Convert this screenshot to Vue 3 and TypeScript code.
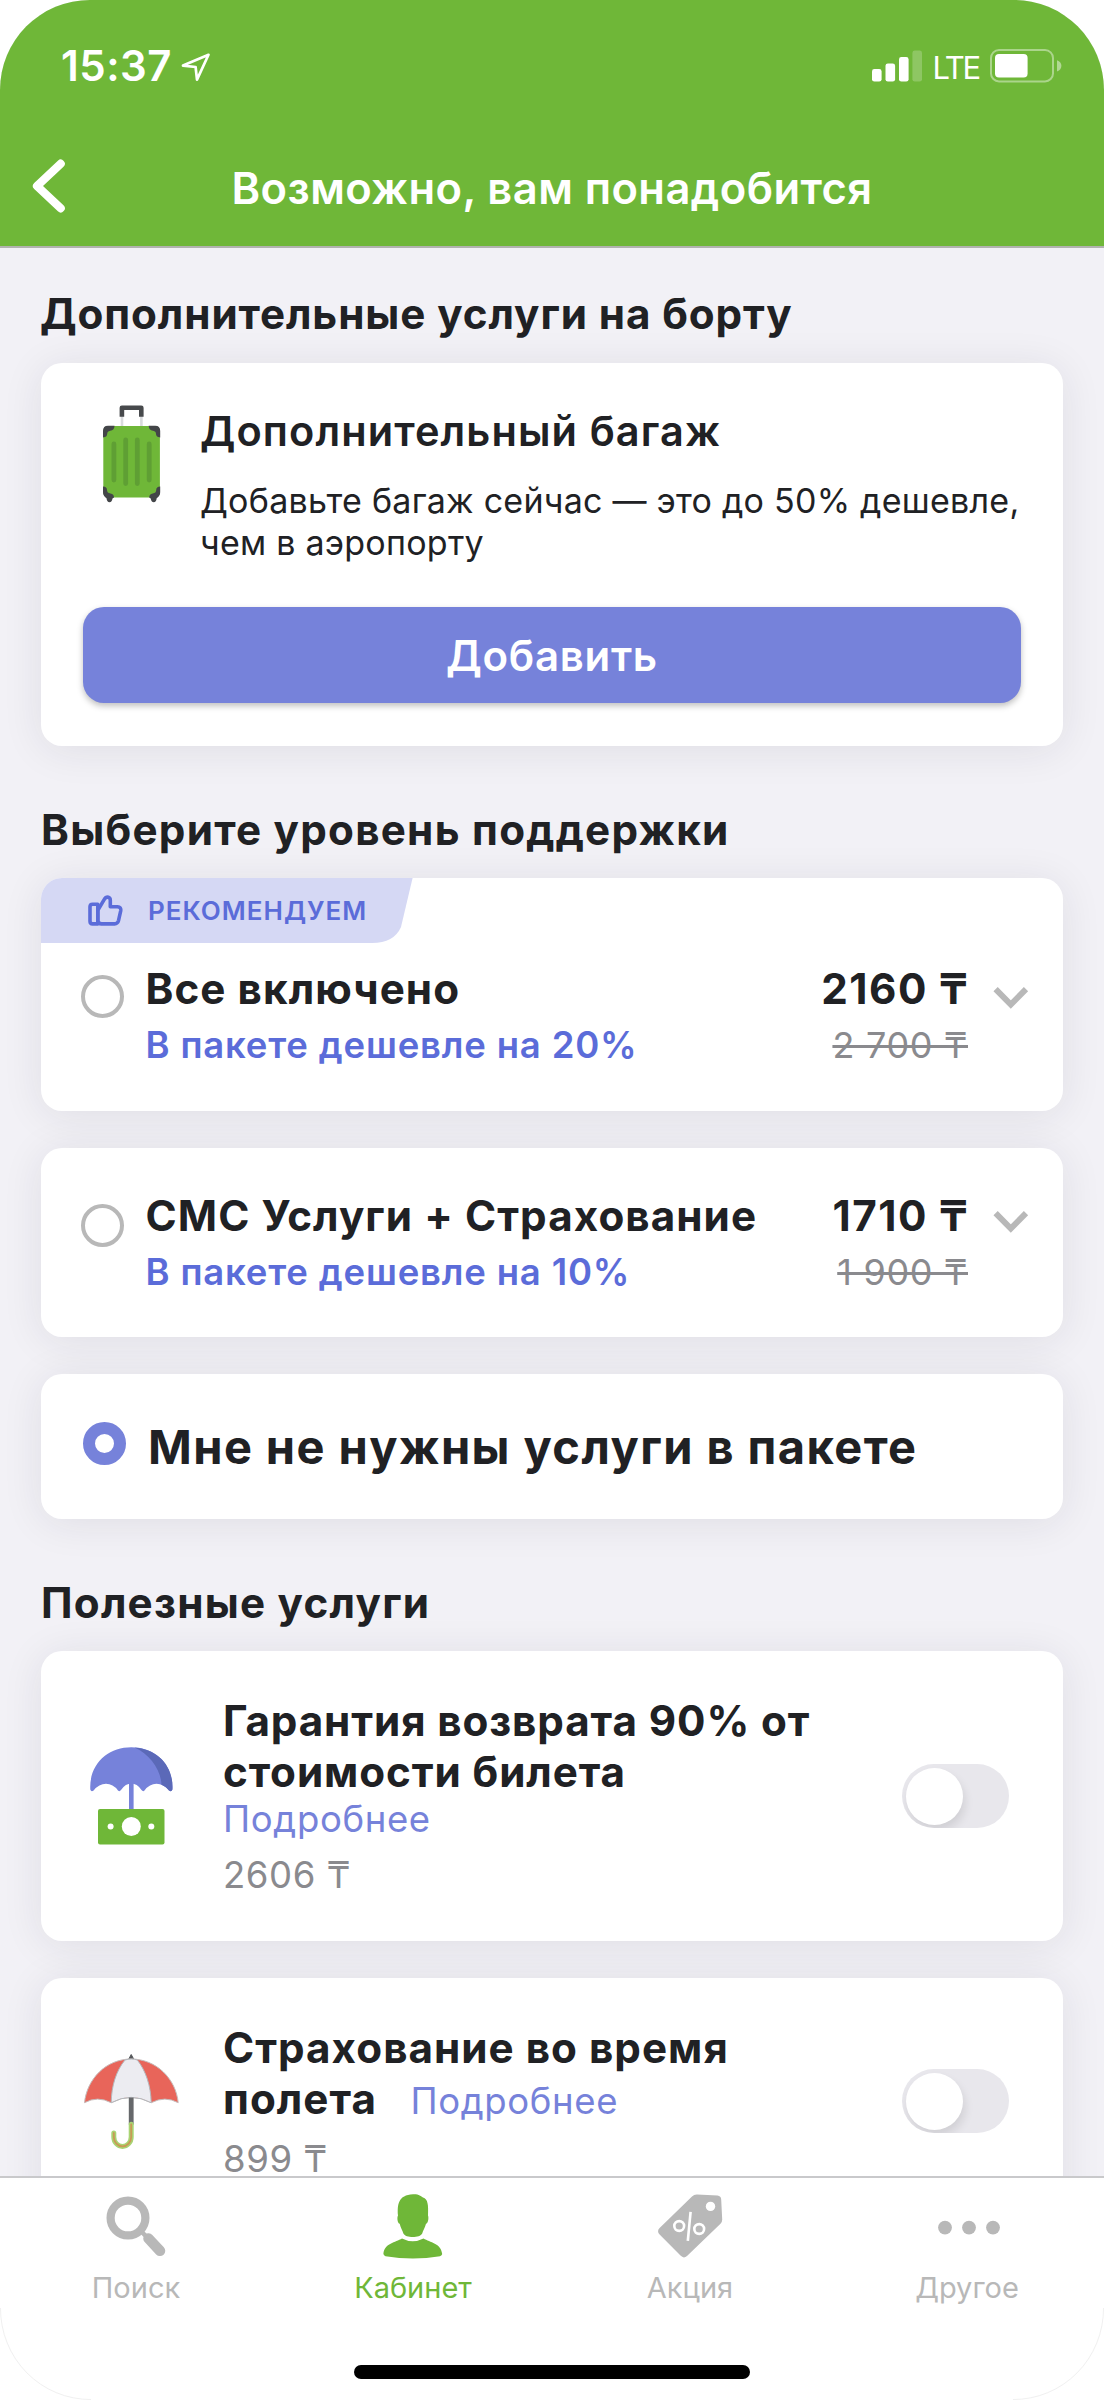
<script setup lang="ts">
interface SupportPlan {
  title: string
  note: string
  price: string
  oldPrice: string
  recommended: boolean
}

interface Tab {
  id: string
  label: string
  active: boolean
}

const plans: SupportPlan[] = [
  { title: 'Все включено', note: 'В пакете дешевле на 20%', price: '2160 ₸', oldPrice: '2 700 ₸', recommended: true },
  { title: 'СМС Услуги + Страхование', note: 'В пакете дешевле на 10%', price: '1710 ₸', oldPrice: '1 900 ₸', recommended: false },
]

const tabs: Tab[] = [
  { id: 'search', label: 'Поиск', active: false },
  { id: 'account', label: 'Кабинет', active: true },
  { id: 'promo', label: 'Акция', active: false },
  { id: 'more', label: 'Другое', active: false },
]
</script>

<template>
  <div class="screen">
    <header class="header">
      <div class="status">
        <div class="clock">
          <span class="time">15:37</span>
          <svg class="location" width="30" height="29" viewBox="0 0 30 29">
            <path d="M27.5 1.8 2 12.6 14.6 14 16 26.6Z" fill="none" stroke="#fff" stroke-width="2.7" stroke-linejoin="round" />
          </svg>
        </div>
        <div class="indicators">
          <svg width="51" height="32" viewBox="0 0 51 32" fill="#fff">
            <rect x="0" y="19" width="9.6" height="12.6" rx="2.4" />
            <rect x="13.5" y="13.4" width="9.6" height="18.2" rx="2.4" />
            <rect x="27" y="7" width="9.6" height="24.6" rx="2.4" />
            <rect x="40.4" y="0.6" width="9.6" height="31" rx="2.4" opacity="0.22" />
          </svg>
          <span class="network">LTE</span>
          <svg width="72" height="34" viewBox="0 0 72 34">
            <rect x="1" y="1" width="62" height="31.4" rx="8" fill="none" stroke="#fff" stroke-opacity="0.42" stroke-width="2" />
            <rect x="5" y="5" width="32.6" height="23.4" rx="4" fill="#fff" />
            <path d="M67 11.2q4.4 1.6 4.4 5.6t-4.4 5.6z" fill="#fff" fill-opacity="0.46" />
          </svg>
        </div>
      </div>
      <div class="navbar">
        <svg class="back" width="34" height="54" viewBox="0 0 34 54">
          <path d="M28.7 4.7 5 27 28.7 49.3" fill="none" stroke="#fff" stroke-width="8.2" stroke-linecap="round" stroke-linejoin="round" />
        </svg>
        <h1 class="page-title">Возможно, вам понадобится</h1>
      </div>
    </header>

    <main class="content">
      <h2 class="section first">Дополнительные услуги на борту</h2>
      <section class="card baggage">
        <div class="baggage-info">
          <svg class="suitcase" width="58" height="98" viewBox="0 0 58 98">
            <path d="M19 10v12M38.4 10v12" stroke="#d9dbdd" stroke-width="2.6" />
            <path d="M18.9 11.8V2.7h19.4v9.1" fill="none" stroke="#47494c" stroke-width="4.6" stroke-linejoin="round" />
            <rect x="0.3" y="21" width="56.6" height="71.4" rx="5" fill="#6fb738" />
            <path d="M10.9 39v36M22.7 35v43.5M34.3 35v43.5M46.2 39v36" stroke="#5f9f34" stroke-width="4.8" stroke-linecap="round" />
            <path d="M0 32.5V26q0-5.3 5-5.3h6.5q0 4.3-4.3 5-3 .6-3 3.3 0 3-4.2 3.5zM57.2 32.5V26q0-5.3-5-5.3h-6.5q0 4.3 4.3 5 3 .6 3 3.3 0 3 4.2 3.5zM0 81.5q4 0 4 3.5 0 3 3.5 3.5 3.5.6 3.5 4l-1.5 1q-.5 3.7-3 3.7t-3-4Q0 91 0 87zM57.2 81.5q-4 0-4 3.5 0 3-3.5 3.5-3.5.6-3.5 4l1.5 1q.5 3.7 3 3.7t3-4q3.5-2.2 3.5-6.2z" fill="#434548" />
          </svg>
          <div class="baggage-text">
            <h3 class="baggage-title">Дополнительный багаж</h3>
            <p class="baggage-note">Добавьте багаж сейчас — это до 50% дешевле,<br />чем в аэропорту</p>
          </div>
        </div>
        <button class="add" type="button">Добавить</button>
      </section>

      <h2 class="section">Выберите уровень поддержки</h2>
      <section v-for="plan in plans" :key="plan.title" class="card plan" :class="{ recommended: plan.recommended }">
        <div v-if="plan.recommended" class="badge">
          <svg class="badge-shape" width="373" height="65" viewBox="0 0 373 65">
            <path d="M0 0H371.6L360 49Q353 65 331 65H0Z" fill="#d5d8f4" />
          </svg>
          <svg class="thumb" width="35" height="31" viewBox="0 0 35 31" fill="none" stroke="#5b6cd9" stroke-width="3.6" stroke-linejoin="round">
            <path d="M9.8 9.2H4.6Q2 9.2 2 11.8V26.3Q2 28.9 4.6 28.9H9.8Z" />
            <path d="M9.8 15.2 16.3 4.4Q17.8 1.8 20.4 2.2 22.4 2.8 22.3 5.5V11.7H29.5Q33.3 12 32.7 15.8L30.5 25.6Q29.7 28.7 26.5 28.9H13.5Q10.4 28.7 9.8 26Z" />
          </svg>
          <span class="badge-label">РЕКОМЕНДУЕМ</span>
        </div>
        <div class="plan-body">
          <span class="radio"></span>
          <div class="plan-text">
            <div class="plan-title">{{ plan.title }}</div>
            <div class="plan-note">{{ plan.note }}</div>
          </div>
          <div class="plan-prices">
            <div class="price">{{ plan.price }}</div>
            <div class="old-price">{{ plan.oldPrice }}</div>
          </div>
          <svg class="chevron" width="36" height="24" viewBox="0 0 36 24">
            <path d="M2.6 3.2 17.8 18.6 33 3.2" fill="none" stroke="#b8b8b8" stroke-width="6" />
          </svg>
        </div>
      </section>
      <section class="card none">
        <span class="radio checked"></span>
        <div class="none-title">Мне не нужны услуги в пакете</div>
      </section>

      <h2 class="section">Полезные услуги</h2>
      <section class="card service refund">
        <svg class="service-icon" width="84" height="99" viewBox="0 0 84 99">
          <path d="M0.3 42.5C-1 17 18 .3 41.3.3S83.6 17 82.4 42.5Q81.5 45.3 79 43.5 73.5 36.8 66.5 36.8T54.5 43.5Q53 45 51.5 43 47 36.6 41.3 36.6T31 43Q29.5 45 28 43.5 23 36.8 16 36.8T3.6 43.5Q1.2 45.3.3 42.5Z" fill="#7682da" />
          <path d="M44.5.4C67 2 83.8 18 82.4 42.5Q81.5 45.3 79 43.5 75.5 39.3 71.5 37.8C71 23 60 7 44.5.4Z" fill="#5b69b8" />
          <rect x="39" y="36" width="4.6" height="27" fill="#7682da" />
          <rect x="8" y="62" width="66.5" height="35.4" rx="2" fill="#6fb738" />
          <circle cx="41.3" cy="79.5" r="9.5" fill="#fff" />
          <circle cx="20.6" cy="79.5" r="3" fill="#fff" />
          <circle cx="61.3" cy="79.5" r="3" fill="#fff" />
        </svg>
        <div class="service-text">
          <div class="service-title">Гарантия возврата 90% от<br />стоимости билета</div>
          <a class="more block">Подробнее</a>
          <div class="service-price">2606 ₸</div>
        </div>
        <span class="toggle"></span>
      </section>
      <section class="card service flight">
        <svg class="service-icon" width="95" height="97" viewBox="0 0 95 97">
          <path d="M44 6.5 47.2.5 50.5 6.5Z" fill="#55575a" stroke="#55575a" />
          <path d="M.5 48.7C3 25 22 5 47.2 5S92 25 94.2 48.7Q81 41.5 67.2 48.7 47 38 27.2 48.7 13.5 41.5.5 48.7Z" fill="#e8655a" stroke="#c6bcbb" stroke-width="1" />
          <path d="M47.2 5Q44 5 41 6C32 17 27.5 32 27.2 48.7Q47 38 67.2 48.7C66.8 32 62 17 53.3 6Q50.5 5 47.2 5Z" fill="#ececf1" stroke="#b4b8bc" stroke-width="1" />
          <rect x="44.8" y="43.6" width="4.8" height="27" fill="#66686b" />
          <path d="M47.2 70.3V83A8.7 9.4 0 0 1 29.8 83V79" fill="none" stroke="#a8d472" stroke-width="5" stroke-linecap="round" />
          <path d="M47.2 70.3V83A8.7 9.4 0 0 1 29.8 83V79" fill="none" stroke="#c99a55" stroke-width="1.8" stroke-linecap="round" />
        </svg>
        <div class="service-text">
          <div class="service-title">Страхование во время<br />полета<a class="more inline">Подробнее</a></div>
          <div class="service-price">899 ₸</div>
        </div>
        <span class="toggle"></span>
      </section>
    </main>

    <nav class="tabbar">
      <div v-for="tab in tabs" :key="tab.id" class="tab" :class="{ active: tab.active }">
        <svg v-if="tab.id === 'search'" class="tab-icon" width="60" height="66" viewBox="0 0 60 66">
          <circle cx="22" cy="24" r="17.4" fill="none" stroke="currentColor" stroke-width="8.2" />
          <path d="M35 37 43 45.5" stroke="currentColor" stroke-width="4.5" />
          <path d="M42.5 44.5 54 56.8" stroke="currentColor" stroke-width="10.5" stroke-linecap="round" />
        </svg>
        <svg v-else-if="tab.id === 'account'" class="tab-icon" width="60" height="66" viewBox="0 0 60 66" fill="currentColor">
          <path d="M30 .3C36 0 38 2.5 40 3.5 45 5 45.5 11 45 21.5 46 24 45 29.5 43 29.7 42 34 40 36 39.2 39.5 37 44.3 22.5 44.3 20.4 39.5 19.6 36 17.5 34 16.7 29.7 14.7 29.5 13.7 24 15 21.5 14.3 11 15 1 30 .3Z" />
          <path d="M19 44.5Q29.7 50 40.5 44.5C47 48.5 58 49 59.2 60Q59 61.5 57 62.2 30 67 2.5 62.2.8 61.5.4 60C1.5 49 12.5 48.5 19 44.5Z" />
        </svg>
        <svg v-else-if="tab.id === 'promo'" class="tab-icon" width="65" height="66" viewBox="0 0 65 66">
          <path d="M39 .6 59.5 1.6Q63 2 63.2 5.5L64.2 25.5Q64.3 28 62.5 29.8L29 62Q25.7 65 22.5 61.6L1.6 40.5Q-1.5 37.2 1.6 34L34 2.5Q36 .5 39 .6Z" fill="currentColor" />
          <circle cx="52.5" cy="12.4" r="4.7" fill="#fff" />
          <g fill="none" stroke="#fff" stroke-width="2.6">
            <circle cx="21.2" cy="32" r="4.9" />
            <circle cx="41.2" cy="35" r="4.9" />
            <path d="M32.6 17.8 29.8 46.8" />
          </g>
        </svg>
        <svg v-else class="tab-icon dots" width="64" height="66" viewBox="0 0 64 66" fill="currentColor">
          <circle cx="8" cy="33.6" r="6.9" />
          <circle cx="32" cy="33.6" r="6.9" />
          <circle cx="56" cy="33.6" r="6.9" />
        </svg>
        <span class="tab-label">{{ tab.label }}</span>
      </div>
      <span class="home-bar"></span>
    </nav>
    <svg class="corners" width="1104" height="92" viewBox="0 0 1104 92" fill="none" stroke="#f0f0f0" stroke-width="1">
      <path d="M.5 0A90 91 0 0 0 91 91.5M1103.5 0A90 91 0 0 1 1013 91.5" />
    </svg>
  </div>
</template>

<style>
body {
  margin: 0;
  background: #fff;
}
</style>

<style scoped>
* {
  box-sizing: border-box;
}
h1,
h2,
h3,
p {
  margin: 0;
}
svg {
  display: block;
  flex: none;
}
.screen {
  position: relative;
  width: 1104px;
  height: 2400px;
  display: flex;
  flex-direction: column;
  overflow: hidden;
  border-radius: 90px 90px 0 0;
  background: #f2f1f6;
  color: #202124;
  font-family: Inter, 'Noto Sans', sans-serif;
}
.header {
  flex: none;
  height: 248px;
  background: #6fb738;
  border-bottom: 2px solid #b1b3ae;
  color: #fff;
}
.status {
  height: 134px;
  padding: 41px 42px 0 61px;
  display: flex;
  justify-content: space-between;
  align-items: flex-start;
}
.clock {
  display: flex;
}
.time {
  width: 120px;
  font-size: 42px;
  line-height: 50px;
  font-weight: 600;
  letter-spacing: 0.5px;
}
.location {
  margin-top: 12px;
}
.indicators {
  display: flex;
  height: 50px;
  align-items: center;
}
.indicators svg:first-child {
  margin-right: 9.5px;
}
.network {
  width: 57.5px;
  font-size: 31px;
  line-height: 40px;
  padding-top: 3px;
  letter-spacing: -2.3px;
}
.navbar {
  height: 112px;
  display: flex;
  align-items: flex-start;
  padding: 25px 32px 0;
}
.page-title {
  flex: 1;
  margin: 3.5px 34px 0 0;
  text-align: center;
  font-size: 43.5px;
  line-height: 50px;
  font-weight: 600;
  letter-spacing: 0.44px;
  white-space: nowrap;
}
.content {
  flex: 1;
  min-height: 0;
  overflow: hidden;
  padding: 0 41px;
}
.section {
  margin: 59px 0 23px;
  height: 50px;
  font-size: 42.2px;
  line-height: 50px;
  font-weight: 700;
  letter-spacing: 1.25px;
  white-space: nowrap;
}
.section.first {
  margin: 41px 0 24px -1px;
  letter-spacing: 0.9px;
}
.card {
  position: relative;
  width: 1022px;
  background: #fff;
  border-radius: 21px;
  box-shadow: 0 4px 42px rgba(30, 30, 50, 0.09);
}
.card + .card {
  margin-top: 37px;
}
.baggage {
  height: 383px;
  padding: 42px 42px 0;
}
.baggage-info {
  display: flex;
  height: 202px;
  padding-left: 20px;
}
.baggage-text {
  margin-left: 39px;
  white-space: nowrap;
}
.baggage-title {
  font-size: 41.5px;
  line-height: 50px;
  font-weight: 600;
  letter-spacing: 1.1px;
  margin-top: 1px;
}
.baggage-note {
  margin-top: 24px;
  font-size: 34px;
  line-height: 41.5px;
  letter-spacing: 0.25px;
}
.add {
  display: block;
  width: 938px;
  height: 96px;
  padding: 0;
  border: 0;
  border-radius: 21px;
  background: #7682da;
  box-shadow: 0 3px 6px rgba(0, 0, 0, 0.25);
  color: #fff;
  font: 600 42px/95px Inter, sans-serif;
  letter-spacing: 0.7px;
}
.plan {
  height: 189px;
}
.plan.recommended {
  height: 233px;
}
.badge {
  position: relative;
  height: 65px;
  display: flex;
  align-items: center;
  padding-left: 47px;
  border-top-left-radius: 21px;
  overflow: hidden;
}
.badge-shape {
  position: absolute;
  left: 0;
  top: 0;
}
.thumb {
  position: relative;
}
.badge-label {
  position: relative;
  margin-left: 25px;
  font-size: 26px;
  line-height: 32px;
  font-weight: 600;
  letter-spacing: 1px;
  color: #5b6cd9;
}
.plan-body {
  display: flex;
  padding: 43px 34px 0 40px;
}
.recommended .plan-body {
  padding-top: 21px;
}
.radio {
  flex: none;
  width: 43px;
  height: 43px;
  margin-top: 13px;
  border: 4px solid #b8b8b8;
  border-radius: 50%;
}
.recommended .radio {
  margin-top: 11px;
}
.plan-text {
  flex: 1;
  margin-left: 21.5px;
}
.plan-title,
.price {
  font-size: 42.2px;
  line-height: 50px;
  font-weight: 700;
  letter-spacing: 1.06px;
  white-space: nowrap;
}
.price {
  letter-spacing: 1.5px;
}
.plan-note,
.old-price {
  margin-top: 8.5px;
  font-size: 36.5px;
  line-height: 44px;
  font-weight: 600;
  letter-spacing: 0.82px;
  color: #5b6cd9;
}
.plan-prices {
  text-align: right;
}
.old-price {
  margin-right: 1px;
  font-size: 36px;
  font-weight: 400;
  letter-spacing: 0.7px;
  color: #8a8a8e;
  text-decoration: line-through;
}
.chevron {
  margin: 19px 0 0 24px;
}
.recommended .chevron {
  margin-top: 22px;
}
.none {
  height: 145px;
  display: flex;
  align-items: flex-start;
  padding: 44.5px 42px 0;
}
.radio.checked {
  margin-top: 3.5px;
  border: 12.5px solid #7682da;
}
.none-title {
  margin-left: 22px;
  font-size: 47px;
  line-height: 56px;
  font-weight: 700;
  letter-spacing: 1.42px;
  white-space: nowrap;
}
.service {
  height: 290px;
  display: flex;
  align-items: flex-start;
  padding-right: 54px;
}
.service-text {
  flex: 1;
  margin-top: 44px;
  white-space: nowrap;
}
.service-title {
  font-size: 42.2px;
  line-height: 51px;
  font-weight: 700;
  letter-spacing: 1.02px;
}
.refund .service-title {
  letter-spacing: 0.9px;
}
.more {
  font-size: 36.5px;
  font-weight: 400;
  letter-spacing: 0.65px;
  color: #7682da;
}
.more.block {
  display: block;
  line-height: 44px;
}
.more.inline {
  margin-left: 33.5px;
}
.service-price {
  font-size: 36.5px;
  line-height: 44px;
  letter-spacing: 0.6px;
  color: #8a8a8e;
}
.refund .service-icon {
  margin: 96px 49px 0 49px;
}
.refund .service-price {
  margin-top: 12px;
}
.flight .service-icon {
  margin: 76px 44px 0 43px;
}
.flight .service-price {
  margin-top: 10px;
}
.toggle {
  flex: none;
  width: 107px;
  height: 64px;
  margin-top: 113px;
  padding: 3.5px;
  border-radius: 32px;
  background: #e8e7ec;
  overflow: hidden;
}
.flight .toggle {
  margin-top: 91px;
}
.toggle::before {
  content: '';
  display: block;
  width: 57px;
  height: 57px;
  border-radius: 50%;
  background: #fff;
  box-shadow: 2px 6px 10px rgba(0, 0, 0, 0.1);
}
.tabbar {
  position: relative;
  flex: none;
  height: 224px;
  display: flex;
  background: #fff;
  border-top: 2px solid #c9c9cb;
}
.tab {
  flex: none;
  width: 277px;
  display: flex;
  flex-direction: column;
  align-items: center;
  padding-top: 16px;
  color: #b8b8b8;
}
.tab:first-child {
  margin-left: -2.5px;
}
.tab.active {
  color: #6fb738;
}
.tab-icon.dots {
  margin-left: 4px;
}
.tab-label {
  margin-top: 10px;
  font-size: 29px;
  line-height: 36px;
}
.home-bar {
  position: absolute;
  left: 354px;
  bottom: 21px;
  width: 396px;
  height: 14px;
  border-radius: 7px;
  background: #000;
}
.corners {
  position: absolute;
  left: 0;
  bottom: 0;
}
</style>
